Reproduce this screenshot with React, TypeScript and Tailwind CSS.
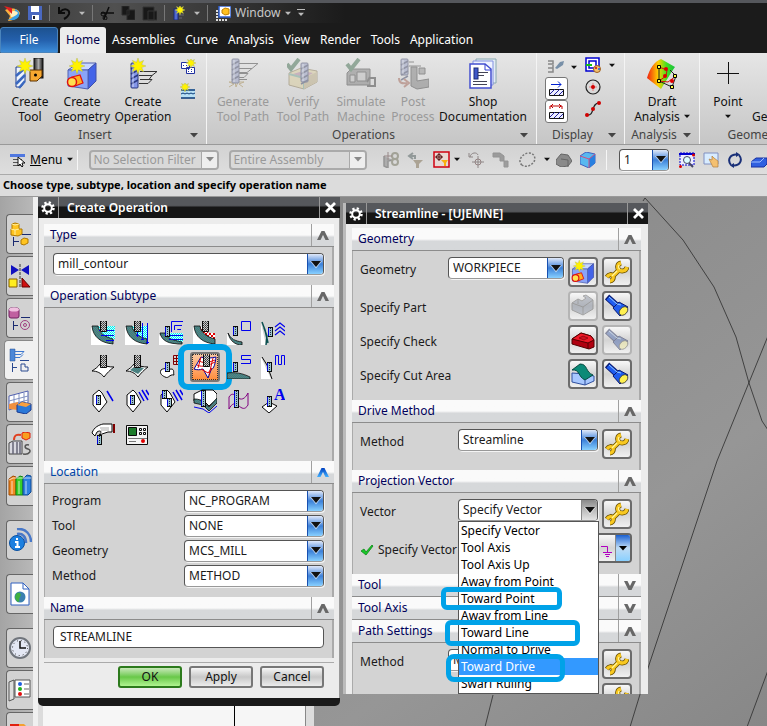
import type { ReactNode } from "react";

const INK = "#0a0a0a";

/* ---------- shared drawing parts ---------- */

function Patterns() {
  return (
    <svg className="absolute size-0" aria-hidden="true">
      <defs>
        <pattern id="mesh" width="2" height="2" patternUnits="userSpaceOnUse">
          <rect width="2" height="2" fill="#c8c8c8" />
          <rect width="1" height="1" fill="#333" />
          <rect x="1" y="1" width="1" height="1" fill="#555" />
        </pattern>
        <pattern id="teal" width="2" height="2" patternUnits="userSpaceOnUse">
          <rect width="2" height="2" fill="#2a8a8a" />
          <rect width="1" height="1" fill="#6a7878" />
          <rect x="1" y="1" width="1" height="1" fill="#6a7878" />
        </pattern>
        <pattern id="cyan" width="2" height="2" patternUnits="userSpaceOnUse">
          <rect width="2" height="2" fill="#c8ffff" />
          <rect width="1" height="1" fill="#00f0f0" />
          <rect x="1" y="1" width="1" height="1" fill="#00f0f0" />
        </pattern>
        <pattern id="redmesh" width="4" height="4" patternUnits="userSpaceOnUse">
          <rect width="4" height="4" fill="#fff" />
          <rect width="2" height="2" fill="#e00000" />
          <rect x="2" y="2" width="2" height="2" fill="#e00000" />
        </pattern>
        <linearGradient id="metal" x1="0" x2="1" y1="0" y2="0">
          <stop offset="0" stopColor="#222" />
          <stop offset=".5" stopColor="#aaa" />
          <stop offset="1" stopColor="#111" />
        </linearGradient>
        <linearGradient id="rainbow" x1="0" x2="1" y1="0" y2="0">
          <stop offset="0" stopColor="#f02010" />
          <stop offset=".4" stopColor="#ffd000" />
          <stop offset=".7" stopColor="#40e020" />
          <stop offset="1" stopColor="#18c040" />
        </linearGradient>
        <linearGradient id="chev" x1="0" x2="0" y1="0" y2="1">
          <stop offset="0" stopColor="#0040c0" />
          <stop offset="1" stopColor="#40b0ff" />
        </linearGradient>
      </defs>
    </svg>
  );
}

function Svg({ w, h = w, children, dim }: { w: number; h?: number; children: ReactNode; dim?: boolean }) {
  return (
    <svg width={w} height={h} viewBox={`0 0 ${w} ${h}`} fill="none" aria-hidden="true"
      className={dim ? "shrink-0 opacity-45 grayscale-50" : "shrink-0"}>
      {children}
    </svg>
  );
}

function Star({ x, y, r = 7 }: { x: number; y: number; r?: number }) {
  const points = Array.from({ length: 16 }, (_, i) => {
    const a = (i * Math.PI) / 8;
    const d = i % 2 ? r * 0.5 : r;
    return `${(x + d * Math.sin(a)).toFixed(1)},${(y - d * Math.cos(a)).toFixed(1)}`;
  }).join(" ");
  return <polygon points={points} fill="#fff200" stroke="#a8b060" strokeWidth=".4" />;
}

function Mill({ x = 9, y = 0, h = 11 }: { x?: number; y?: number; h?: number }) {
  return (
    <>
      <rect x={x} y={y} width="7" height={h} fill="url(#mesh)" />
      <path d={`M${x + 0.5} ${y}V${y + h - 0.5}H${x + 6.5}V${y}`} stroke={INK} />
    </>
  );
}

function Cutter({ x, y, h = 10 }: { x: number; y: number; h?: number }) {
  return (
    <>
      <rect x={x} y={y} width="5" height={h} fill="#9cc4cc" />
      <path d={`M${x + 0.5} ${y}v${h}`} stroke="#0000e0" />
      <path d={`M${x + 4.5} ${y}v${h}M${x} ${y + 0.5}h5M${x} ${y + h - 0.5}h5`} stroke={INK} />
      <path d={`M${x + 2.5} ${y + 1}v${h - 2}`} stroke="#224" strokeDasharray="1 1" />
    </>
  );
}

function Arrow({ className = "text-[#222]" }: { className?: string }) {
  return (
    <svg width="8" height="5" viewBox="0 0 8 5" className={`shrink-0 ${className}`} aria-hidden="true">
      <path d="M0 0H8L4 4.6Z" fill="currentColor" />
    </svg>
  );
}

/* ---------- ribbon icons ---------- */

function Drill({ x, y = 0, h = 26 }: { x: number; y?: number; h?: number }) {
  return (
    <>
      <rect x={x} y={y} width="7" height={h} rx="1" fill="#8496e8" stroke="#2a3880" />
      <path d={`M${x} ${y + 6}l7-4M${x} ${y + 11}l7-4M${x} ${y + 16}l7-4M${x} ${y + 21}l7-4`} stroke="#2a3880" strokeWidth="1.5" />
      <path d={`M${x + 2} ${y + 1}v${h - 2}`} stroke="#dfe6ff" strokeWidth=".8" />
    </>
  );
}

function CreateToolIcon() {
  return (
    <Svg w={32}>
      <rect x="20" y="0" width="9" height="20" fill="url(#metal)" stroke="#111" />
      <path d="M16 12h12v6l-5 5h-7Z" fill="#f6a830" stroke="#5a3000" />
      <circle cx="21.500" cy="17" r="1.500" fill="#000" />
      <path d="M2 9h9v14l-4 6H2Z" fill="#eef4fc" stroke="#1b3a90" />
      <path d="M2 18l9-8M2 26l9-9M5 30l6-7" stroke="#3a68c0" strokeWidth="2.500" />
      <Star x={11} y={8} r={8} />
    </Svg>
  );
}

function CreateGeometryIcon({ w = 32 }: { w?: number }) {
  return (
    <svg width={w} height={w} viewBox="0 0 32 32" fill="none" aria-hidden="true">
      <path d="M2 12l10-7h18l-8 7H2Z" fill="#c8d8ff" stroke="#5060b0" />
      <path d="M22 12l8-7v18l-8 8Z" fill="#4464e8" stroke="#4050a8" />
      <path d="M2 12h20v19L2 28Z" fill="#8aa4f8" stroke="#5060b0" />
      <path d="M6 19l8-2 3 8-8 3Z" fill="#ffb020" stroke="#e01010" strokeWidth="1.200" />
      <circle cx="6" cy="24" r="4.500" fill="#ffe050" stroke="#e01010" strokeWidth="1.500" />
      <Star x={11} y={8} r={8} />
    </svg>
  );
}

function CreateOperationIcon() {
  return (
    <Svg w={32}>
      <path d="M13 13.500h17l-5 4H12M13 21.500h12l-4 4H12M14 17.500h11l-3 4" stroke="#333" />
      <Drill x={4} y={5} h={25} />
      <Star x={11} y={8} r={8} />
    </Svg>
  );
}

function GenerateIcon() {
  return (
    <Svg w={32} dim>
      <path d="M12 5.500h19l-6 5H12M12 10.500h13l-5 4h-8M12 15.500h9l-4 4h-5M12 21.500h8" stroke="#333" />
      <path d="M2 29l5-3-5-2 6 0 1 5 2-5 6 0-5 2 4 3" stroke="#b88000" />
      <Drill x={5} y={1} h={24} />
    </Svg>
  );
}

function VerifyIcon() {
  return (
    <Svg w={32} dim>
      <path d="M2 15l12-5 16 3v11l-13 7L2 27Z" fill="#e8cc60" stroke="#907020" />
      <path d="M6 16l10-3 10 2-9 5Z" fill="#d070a0" />
      <path d="M2 16l15 4v11" stroke="#4a8" strokeWidth="2" />
      <path d="M17 20l13-6v10l-13 7Z" fill="#c8a850" />
      <Drill x={14} y={5} h={19} />
      <path d="M0 6l4 5 8-10" stroke="#107030" strokeWidth="4" />
    </Svg>
  );
}

function SimulateIcon() {
  return (
    <Svg w={32} dim>
      <path d="M2 15l4-4h19v16H2Z" fill="#777" stroke="#333" />
      <path d="M5 17h5v7H5zM12 14h9v9h-9z" fill="#bbb" stroke="#333" />
      <path d="M22 28h8v-8h-5M25 19l-3 5" stroke="#333" strokeWidth="2" />
      <path d="M2 6l4 5 8-10" stroke="#107030" strokeWidth="4" />
    </Svg>
  );
}

function PostIcon() {
  return (
    <Svg w={32} dim>
      <path d="M12 4h5M12 8h12" stroke="#333" />
      <path d="M14 9h6v14l12-2v8l-12 2-6-3Z" fill="#777" stroke="#333" />
      <path d="M22 10h6v6h-6z" fill="#888" stroke="#333" />
      <Drill x={4} y={1} h={16} />
      <path d="M2 20c0 5 3 6 8 5M7 21l5 4-5 4" stroke="#d05030" strokeWidth="2" />
    </Svg>
  );
}

function ShopDocIcon() {
  return (
    <Svg w={28} h={32}>
      <path d="M7 1h20v24H7z" fill="#e4ecf4" stroke="#88a8b0" />
      <path d="M4 3h20v24H4z" fill="#eef2ff" stroke="#8090e0" />
      <path d="M1 6h15l6 5v19H1z" fill="#fff" stroke="#4450d0" strokeWidth="1.500" />
      <path d="M16 6v6h6" stroke="#3440d0" />
      <path d="M9 14.500h10M9 17.500h6M4 23.500h14M4 26.500h14" stroke="#445" />
      <rect x="5" y="10" width="4" height="11" fill="#4058c8" stroke="#1b2a78" />
    </Svg>
  );
}

function DraftIcon() {
  return (
    <Svg w={32}>
      <path d="M1 20C4 10 8 4 15 1l14 8c-3 4-5 8-14 22Z" fill="url(#rainbow)" />
      <path d="M13 9v14l13 6 4-11-6-6" stroke="#222" />
      <path d="M13 9l8 3-1 6-7 5 9 1 8-6" stroke="#d01010" />
      <path d="M11.500 7.500h3v3h-3zM11.500 21.500h3v3h-3zM27.500 16.500h3v3h-3zM24.500 27.500h3v3h-3z" fill="#ffff40" stroke="#000" />
      <circle cx="20" cy="11" r="2" fill="#e00000" />
      <circle cx="19" cy="18" r="2" fill="#e00000" />
      <circle cx="26" cy="23" r="2" fill="#e00000" />
    </Svg>
  );
}

function PointIcon() {
  return (
    <Svg w={32}>
      <path d="M16.500 4v22M5 15.500h22" stroke="#111" />
    </Svg>
  );
}

/* ---------- operation subtype icons, one per cell ---------- */

const ARC = <path d="M1 5h6c1 7 7 11 15 13v5C10 22 2 16 1 5Z" fill="url(#teal)" stroke={INK} strokeWidth=".8" />;
const UNDER = <path d="M0 5v19h22Z" fill="#fff" />;
const SHEET = <path d="M1 16c3-2 6-4 8-7 4 2 9 3 14 3-4 3-7 6-10 10-3-4-7-6-12-6Z" fill="#fff" stroke={INK} />;
const FACET = <path d="M8 1L2 6v10l6 7 8-10-5-9Z" fill="#fff" stroke={INK} />;

const SUBTYPES: { name: string; art: ReactNode }[] = [
  { name: "Cavity Mill", art: <>{UNDER}<path d="M7 5h17v13H12Z" fill="url(#cyan)" />{ARC}<path d="M8 9.500h15M10 14.500h13M15 19.500h8" stroke="#00e" /><Mill /></> },
  { name: "Plunge Milling", art: <>{UNDER}<path d="M7 5h15v13H12Z" fill="url(#cyan)" />{ARC}<Mill /><path d="M12.500 11v5M17.500 2v17M22.500 2v21M11 14.500h3M16 18.500h3M21 21.500h3" stroke="#00e" /></> },
  { name: "Corner Rough", art: <><path d="M0 14v10h19Z" fill="#fff" /><path d="M5 12h19v9H10Z" fill="url(#cyan)" /><path d="M1 12h5c2 6 8 7 17 9v2C9 23 3 20 1 12Z" fill="url(#teal)" stroke={INK} strokeWidth=".8" /><path d="M10 14.500h14M10 18.500h14M12.500 11V.5H24M15.500 9V4.500H23M18.500 8V8.500H22" stroke="#00e" /><Cutter x={6} y={5} h={11} /></> },
  { name: "Rest Milling", art: <>{UNDER}<path d="M6 6h9v6h7v7h-8Z" fill="url(#redmesh)" />{ARC}<Mill /></> },
  { name: "Zlevel Profile", art: <><path d="M0 12v12h14Z" fill="#fff" /><path d="M1 12c3 6 7 8 14 9v3C8 24 3 20 1 12Z" fill="url(#teal)" stroke={INK} strokeWidth=".8" /><Cutter x={6} y={5} /><path d="M14.500.5h9v9h-9z" stroke="#00e" /></> },
  { name: "Zlevel Corner", art: <><path d="M0 2v22h5Z" fill="#fff" /><path d="M1 1l3 8 3 13M3 7l3 8-1 9" stroke="#0b5050" strokeWidth="1.500" /><Cutter x={7} y={6} h={10} /><path d="M14 6l5-4 5 4M14 10l5-4 5 4M14 14l5-4 5 4" stroke="#00e" strokeWidth="1.200" /></> },
  { name: "Fixed Contour", art: <>{SHEET}<Mill h={13} /></> },
  { name: "Contour Area", art: <>{SHEET}<path d="M5 15l5-4 9 2-6 6Z" fill="url(#teal)" /><Mill h={13} /></> },
  { name: "Contour Surface Area", art: <><path d="M2 15c4-3 7 0 10-1 4 0 2 4 3 6-5-1-5 4-9 2-2-1-6-3-4-7Z" fill="#fff" stroke={INK} /><Cutter x={6} y={7} /><path d="M14.500.5h9v9h-9zM17.500.5v9M20.500.5v9M14.500 3.500h9M14.500 6.500h9" stroke="#800000" /></> },
  { name: "Streamline", art: <><path d="M1 14L8 2c5 2 10 1 15 0-1 8-2 11-5 13l-3 8-5-9c-3 1-6 1-9 0Z" fill="#fff" stroke="#0000a0" /><path d="M4 10c6 3 12 0 18-3M6 6c6 3 11 1 16-1M8 14l7 4 4-5M8 2L5 13M20 3l-4 17" stroke="#e00000" /><Mill x={10} h={12} /></> },
  { name: "Contour Area Non Steep", art: <><path d="M0 18c8-1 15 0 23 4v2H0Z" fill="url(#teal)" stroke={INK} strokeWidth=".8" /><Cutter x={6} y={7} /><path d="M24 .5h-9.500v4h9v4H14" stroke="#00e" /></> },
  { name: "Contour Area Dir Steep", art: <><path d="M0 2v22h10Z" fill="#fff" /><path d="M1 2l5 8 5 14" stroke={INK} /><Cutter x={6} y={7} h={10} /><path d="M14.500 10V.5h3v9h3V.5h3V10" stroke="#00e" /></> },
  { name: "Flowcut Single", art: <>{FACET}<Cutter x={5} y={6} /><path d="M16 2l6 10" stroke="#00e" strokeWidth="1.500" /></> },
  { name: "Flowcut Multiple", art: <>{FACET}<Cutter x={5} y={6} /><path d="M14 3l5 9M17 1l6 10M21 1l3 5" stroke="#00e" strokeWidth="1.500" /></> },
  { name: "Flowcut Ref Tool", art: <>{FACET}<Cutter x={3} y={1} h={9} /><Cutter x={8} y={9} h={9} /><path d="M14 3l5 9M17 1l6 10M21 1l3 5" stroke="#00e" strokeWidth="1.500" /></> },
  { name: "Solid Profile 3D", art: <><path d="M1 5l8-4 11 0 4 4v5l-8 7-6-6-9 1Z" fill="#fff" stroke={INK} /><path d="M1 10c5 0 7 1 9 3l6 5 8-9v5l-8 8-6-6-9-2Z" fill="url(#teal)" stroke={INK} strokeWidth=".8" /><path d="M1 18l9 2 6 4 8-7" stroke="#00e" /><Cutter x={8} y={1} h={17} /></> },
  { name: "Profile 3D", art: <><path d="M2 20V8c3-5 6-2 8 0 4 4 8 2 11-4v12c-3 5-6 4-10 0-3-2-6-2-9 4Z" stroke="#800080" /><Cutter x={7} y={1} h={18} /></> },
  { name: "Contour Text", art: <><path d="M1 18l7-5 8 4-8 7Z" fill="#fff" stroke={INK} /><Cutter x={6} y={7} h={11} /><text x="13" y="11" fontSize="16" fontWeight="700" fontFamily="Liberation Serif, serif" fill="#00e">A</text></> },
  { name: "Mill User", art: <><path d="M1 10C3 4 8 2 12 1h9v8h-4l-9 3c4-4 1-5-2-3l-2 4Z" fill="#fff" stroke={INK} /><path d="M9 5h9M10 7h8" stroke="#aaa" /><path d="M22 1h2v9h-2z" fill="#800000" /><Cutter x={6} y={12} /></> },
  { name: "Mill Control", art: <><path d="M1.500 2.500h21v19h-21z" fill="#f4f4f4" stroke={INK} /><path d="M3.500 4.500h8v8h-8z" fill="#1b7a2a" stroke={INK} /><path d="M14.500 5.500h2v2h-2zM18.500 5.500h2v2h-2zM14.500 9.500h2v2h-2zM18.500 9.500h2v2h-2z" fill="#fff" stroke={INK} /><path d="M3 15.500h19M4 18.500h7" stroke="#777" /><circle cx="18" cy="18" r="2" fill="#e00000" /></> },
];

/* ---------- small icons for rows ---------- */

function Wrench() {
  const d = "M16 3c-4 1-4 5-2 7 3 2 7 1 8-3M14 10L8 16M2 17c2-3 5-3 6-1 1 3-1 5-3 5";
  return (
    <Svg w={24}>
      <path d={d} stroke="#6a5000" strokeWidth="5" />
      <path d={d} stroke="#f8c820" strokeWidth="3.400" />
      <path d="M14 5c-1 2 0 4 1 4M12 11l-5 5" stroke="#fff6a0" strokeWidth="1.200" />
    </Svg>
  );
}

function Torch({ dim }: { dim?: boolean }) {
  return (
    <Svg w={24} dim={dim}>
      <path d="M2 3l10 9" stroke="#0a1a70" strokeWidth="6.500" />
      <path d="M3 4l10 9" stroke="#1f5cf0" strokeWidth="4.500" />
      <path d="M8 14l6-6 9 5-8 9Z" fill="#1f5cf0" stroke="#0a1a70" />
      <path d="M4 3l8 7 4 1" stroke="#90c8ff" />
      <ellipse cx="18.500" cy="17" rx="5" ry="3.500" transform="rotate(-45 18.5 17)" fill="#fff050" stroke="#333" strokeWidth=".8" />
    </Svg>
  );
}

function PartIcon() {
  return (
    <Svg w={24} dim>
      <path d="M1 9l6-4 4 2 4-3-3-2 3-1 7 5v9l-10 6-11-5Z" fill="#8090b0" stroke="#555" />
      <path d="M12 13v8M1 9l11 4 10-7M7 5v5" stroke="#555" />
    </Svg>
  );
}

function CheckIcon() {
  return (
    <Svg w={24}>
      <path d="M1 11l9-6 10 3 3 4v7l-5 2-17-5Z" fill="#b00010" stroke="#500" />
      <path d="M1 11l9-6 10 3 3 4-6 3Z" fill="#f01828" stroke="#500" />
      <path d="M8 10l4-2 5 2-4 2Z" fill="#d01020" stroke="#500" strokeWidth=".5" />
      <path d="M17 15v6" stroke="#500" />
    </Svg>
  );
}

function CutAreaIcon() {
  return (
    <Svg w={24}>
      <path d="M1 11v9l13 3 9-4v-5l-9-2Z" fill="#a8c8ff" stroke="#3050a0" />
      <path d="M1 8L9 2c8 0 5 8 13 11l-8 5C7 15 9 7 1 8Z" fill="#0b8a78" stroke="#064a40" />
      <path d="M14 18v5" stroke="#3050a0" />
    </Svg>
  );
}

/* ---------- form pieces ---------- */

function Select({ id, value, options = [], className = "", plain }: { id: string; value: string; options?: string[]; className?: string; plain?: boolean }) {
  return (
    <span className={`flex h-[22px] shrink-0 overflow-hidden rounded-[4px] border border-[#555] border-b-[#999] bg-white shadow-[1px_1px_0_#f4f4f4] ${className}`}>
      <select id={id} defaultValue={value} className="min-w-0 flex-1 appearance-none bg-transparent pb-px pl-1 leading-5 outline-none">
        {[value, ...options].map((o) => <option key={o}>{o}</option>)}
      </select>
      <span className={`pointer-events-none flex w-4 shrink-0 items-center justify-center border-l ${plain ? "border-[#888] bg-linear-to-b from-[#8a8a8a] via-[#bbb] to-[#e4e4e4]" : "border-[#1850b0] bg-linear-to-b from-[#e0e8f8] via-[#3c80d8] to-[#88d0ff]"}`}>
        <svg width="12" height="9" viewBox="0 0 12 9" aria-hidden="true">
          <path d="M0 1H12L6 8.500Z" fill="#fff" fillOpacity=".6" />
          <path d="M1 1H11L6 7Z" fill="#111" />
        </svg>
      </span>
    </span>
  );
}

function IconButton({ label, children, dim }: { label: string; children: ReactNode; dim?: boolean }) {
  return (
    <button aria-label={label} disabled={dim}
      className={`flex size-[30px] shrink-0 items-center justify-center rounded-[4px] border-2 bg-linear-to-b from-[#f8f8f8] via-[#d4d4d4] to-[#f0f0f0] ${dim ? "border-[#b4b4b4]" : "border-[#6c6c6c]"}`}>
      {children}
    </button>
  );
}

function Header({ title, closed, active }: { title: string; closed?: boolean; active?: boolean }) {
  return (
    <button className={`flex h-[23px] w-full shrink-0 border-b border-[#8c8c8c] bg-linear-to-b from-[#fafafa] from-50% to-[#d6d8da] to-60% text-left leading-[22px] ${active ? "text-[#0046a8]" : "text-[#00005a]"}`}>
      <span className="flex-1 pl-1.5">{title}</span>
      <span className="flex h-full w-[23px] items-center justify-center border-l border-[#a0a0a0]">
        <svg width="12" height="9" viewBox="0 0 12 9" aria-hidden="true" className={closed ? "rotate-180" : ""}>
          <path d="M0 9L4.500 0h3L12 9H8.500L6 4 3.500 9Z" fill={active ? "url(#chev)" : "#686868"} />
        </svg>
      </span>
    </button>
  );
}

function TitleBar({ title }: { title: string }) {
  return (
    <div className="flex h-[21px] shrink-0 items-center bg-linear-to-b from-[#56585c] from-40% to-[#161616] to-50% text-white">
      <span className="flex h-full w-[21px] items-center justify-center border-r border-[#999]">
        <svg width="14" height="14" viewBox="0 0 14 14" fill="none" aria-hidden="true">
          <circle cx="7" cy="7" r="5.500" stroke="#fff" strokeWidth="2.500" strokeDasharray="2.200 2.120" />
          <circle cx="7" cy="7" r="3.800" stroke="#fff" strokeWidth="2" />
        </svg>
      </span>
      <h2 className="flex-1 pl-2 font-semibold">{title}</h2>
      <button aria-label="Close" className="flex h-full w-[21px] items-center justify-center border-l border-[#999]">
        <svg width="11" height="11" viewBox="0 0 11 11" aria-hidden="true">
          <path d="M1 1L10 10M10 1L1 10" stroke="#fff" strokeWidth="2.800" />
        </svg>
      </button>
    </div>
  );
}

const BODY = "border-l border-r-2 border-l-[#aaa] border-r-[#aaa] bg-[#d3d3d3]";

/* ---------- ribbon ---------- */

function BigButton({ lines, icon, className, dim, menu }: { lines: string[]; icon: ReactNode; className: string; dim?: boolean; menu?: boolean }) {
  return (
    <button className={`flex shrink-0 flex-col items-center pt-[5px] leading-[15px] whitespace-nowrap ${dim ? "text-[#9a9a9a]" : "text-[#111]"} ${className}`}>
      <span className="flex h-9 items-start">{icon}</span>
      <span>{lines[0]}</span>
      <span className="flex h-[15px] items-center gap-1">{lines[1]}{menu && <Arrow className="w-1.5 text-[#111]" />}</span>
    </button>
  );
}

function Group({ label, className, children, arrow = true }: { label: string; className: string; children: ReactNode; arrow?: boolean }) {
  return (
    <section className={`flex shrink-0 flex-col border-r border-[#f4f4f4] ${className}`}>
      <div className="flex h-[74px]">{children}</div>
      <div className="flex h-4 items-center pr-2 text-[#444]">
        <span className="flex-1 text-center">{label}</span>
        {arrow && <Arrow className="text-[#444]" />}
      </div>
    </section>
  );
}

function Ribbon() {
  return (
    <div className="flex h-[92px] shrink-0 overflow-hidden border-b border-[#999] bg-linear-to-b from-[#e6e6e6] to-[#c6c6c6]">
      <Group label="Insert" className="w-[207px]">
        <BigButton lines={["Create", "Tool"]} icon={<CreateToolIcon />} className="ml-2 w-11" />
        <BigButton lines={["Create", "Geometry"]} icon={<CreateGeometryIcon />} className="w-[60px]" />
        <BigButton lines={["Create", "Operation"]} icon={<CreateOperationIcon />} className="w-[62px]" />
        <div className="flex flex-col gap-2 pt-1.5 pl-1.5">
          <button aria-label="Create Program">
            <Svg w={16}>
              <path d="M1.500 3.500h8v6h-8zM6.500 8.500h8v6h-8z" fill="#fff" stroke="#2030a0" />
              <path d="M3 6.500h1M6 6.500h1M8 10.500h1M11 10.500h1M8 12.500h1M11 12.500h1" stroke="#2030a0" />
              <Star x={11} y={4} r={5} />
            </Svg>
          </button>
          <button aria-label="Create Method">
            <Svg w={16}>
              <path d="M1 6h14v9H1z" fill="#b8e0f4" />
              <path d="M1 7h14M1 15h14" stroke="#0a3a78" strokeWidth="1.500" />
              <path d="M1 11l2-1 2 1 2-1 2 1 2-1 2 1 2-1" stroke="#0a3a78" />
              <Star x={5} y={4} r={5} />
            </Svg>
          </button>
        </div>
      </Group>
      <Group label="Operations" className="w-[330px]">
        <BigButton dim lines={["Generate", "Tool Path"]} icon={<GenerateIcon />} className="ml-1.5 w-[60px]" />
        <BigButton dim lines={["Verify", "Tool Path"]} icon={<VerifyIcon />} className="w-[60px]" />
        <BigButton dim lines={["Simulate", "Machine"]} icon={<SimulateIcon />} className="w-[56px]" />
        <BigButton dim lines={["Post", "Process"]} icon={<PostIcon />} className="w-[48px]" />
        <BigButton lines={["Shop", "Documentation"]} icon={<ShopDocIcon />} className="w-[92px]" />
      </Group>
      <Group label="Display" className="w-[88px]">
        <div className="flex flex-col pt-1 pl-2">
          <button className="flex h-5 items-center gap-1.5" aria-label="Show tool path">
            <Svg w={20} h={16}>
              <path d="M3 2h5v3H3M3 9h5V6M3 9h5v4H3" stroke="#888" strokeWidth="1.500" />
              <path d="M10 9l5-6 4-1-1 4-6 4Z" fill="#7890a8" />
            </Svg>
            <Arrow className="w-1.5 text-[#111]" />
          </button>
          {["#0020d0", "#c00000"].map((c) => (
            <button key={c} aria-label="Boundary display" className="flex size-[23px] items-center justify-center rounded-[3px] border border-[#777] bg-white">
              <Svg w={17}>
                <path d="M1.500 9.500h14v6h-14z" fill="#eef" stroke="#111" />
                <path d="M2 14l5-5M6 15l6-6M11 15l4-4" stroke="#2020a0" />
                <path d={c === "#c00000" ? "M2 6V3h12v3M5 1L3 3l2 2M11 1l2 2-2 2" : "M3 4.500h10M10 1.500l3 3-3 3"} stroke={c} />
              </Svg>
            </button>
          ))}
        </div>
        <div className="flex flex-col gap-1.5 pt-1 pl-2">
          <button className="flex items-center gap-2" aria-label="Object colors">
            <Svg w={16}>
              <path d="M1 1h13v13H1zM4 4h7v7H4z" fill="#fff" stroke="#0000d0" strokeWidth="1.500" />
              <path d="M1 8h6" stroke="#10c010" strokeWidth="2" />
              <circle cx="12" cy="12" r="3.500" fill="#f0c070" stroke="#a06020" />
              <circle cx="11" cy="11" r="1" fill="#e00000" />
              <circle cx="14" cy="12" r="1" fill="#2060e0" />
            </Svg>
            <Arrow className="w-1.5 text-[#111]" />
          </button>
          <button aria-label="Circle center">
            <Svg w={16}>
              <circle cx="8" cy="8" r="7" stroke="#222" strokeWidth="1.200" />
              <path d="M8 4v8M4 8h8" stroke="#e08080" />
              <circle cx="8" cy="8" r="2" fill="#d00000" />
            </Svg>
          </button>
          <button aria-label="Curve ends">
            <Svg w={16}>
              <path d="M2 14c8 1 4-12 12-12" stroke="#222" strokeWidth="1.200" />
              <circle cx="2" cy="14" r="2" fill="#d00000" />
              <circle cx="8" cy="8" r="2" fill="#d00000" />
              <circle cx="14" cy="2" r="2" fill="#d00000" />
            </Svg>
          </button>
        </div>
      </Group>
      <Group label="Analysis" className="w-[75px]">
        <BigButton menu lines={["Draft", "Analysis"]} icon={<DraftIcon />} className="w-full" />
      </Group>
      <Group label="Geometry" className="w-[120px]" arrow={false}>
        <BigButton menu lines={["Point", ""]} icon={<PointIcon />} className="w-14" />
        <BigButton lines={["Edit", "Geometry"]} icon={null} className="-ml-1 w-14" />
      </Group>
    </div>
  );
}

function QuickAccess() {
  return (
    <div className="flex h-[23px] shrink-0 items-center border-t-3 border-[#55575c] bg-linear-to-r from-[#3a3a3a] via-[#505050] via-15% to-[#1b1b1b] to-45%">
      <div className="flex items-center gap-[7px] pl-1">
        <Svg w={17}>
          <path d="M1 5c7-3 14-1 15 3-1 4-6 8-12 8l2-5Z" fill="#f8b040" />
          <path d="M3 15c6-1 8-5 8-11 6 2 6 9-1 11Z" fill="#38a0e8" />
          <path d="M6 8c3-3 7-2 8 0-1 2-4 4-7 4Z" fill="#fff0c0" />
          <path d="M0 1l8 2 0 6Z" fill="#e02020" />
        </Svg>
        <button aria-label="Save">
          <Svg w={14}>
            <path d="M0 0h14v14H0z" fill="#4a68c0" />
            <path d="M3 0h8v6H3zM4 9h7v5H4z" fill="#fff" />
            <path d="M5 10h2v3H5z" fill="#223" />
          </Svg>
        </button>
        <span className="h-4 w-px bg-[#777]" />
        <button aria-label="Undo" className="flex items-center gap-2">
          <Svg w={14}><path d="M2 1v6h6M3 6c5-5 10-2 9 2-1 3-3 4-5 5" stroke="#0c0c0c" strokeWidth="2" /></Svg>
          <Arrow className="w-1.5 text-[#bbb]" />
        </button>
        <span className="h-4 w-px bg-[#777]" />
        <button aria-label="Cut"><Svg w={14}><path d="M1 7h13M4 13L9 1" stroke="#0c0c0c" strokeWidth="1.500" /><circle cx="3" cy="8" r="2" stroke="#0c0c0c" /><circle cx="5" cy="12" r="2" stroke="#0c0c0c" /></Svg></button>
        <button aria-label="Copy"><Svg w={14}><path d="M1 0h7v9H1zM6 4h8v10H6z" fill="#181818" stroke="#2c2c2c" /></Svg></button>
        <button aria-label="Paste"><Svg w={15}><path d="M1 1h11v13H1zM6 5h9v9H6z" fill="#181818" stroke="#333" /></Svg></button>
        <span className="h-4 w-px bg-[#777]" />
        <button aria-label="Create Operation" className="flex items-center gap-2">
          <Svg w={14}><rect x="2" y="3" width="4" height="11" fill="#5068d0" stroke="#1b2a78" /><path d="M7 9h5M7 12h3" stroke="#667" /><Star x={8} y={4} r={5} /></Svg>
          <Arrow className="w-1.5 text-[#bbb]" />
        </button>
        <span className="h-4 w-px bg-[#777]" />
      </div>
      <button className="flex items-center gap-1 pl-2 text-[#c8c8c8]">
        <Svg w={15}>
          <path d="M1 4v10h10" stroke="#ddd" strokeWidth="2" strokeDasharray="2 1" />
          <path d="M3 0h12v11H3z" fill="#fff" stroke="#3060d0" strokeWidth="1.500" />
          <path d="M6 4l3-2 4 1v5l-4 1-3-2Z" fill="#ffc020" stroke="#c08000" />
        </Svg>
        Window
        <Arrow className="w-1.5 text-[#bbb]" />
      </button>
      <span className="flex flex-col items-center gap-0.5 pl-1.5">
        <span className="h-px w-2 bg-[#bbb]" />
        <Arrow className="w-1.5 text-[#bbb]" />
      </span>
    </div>
  );
}

const TABS = ["Assemblies", "Curve", "Analysis", "View", "Render", "Tools", "Application"];

function Tabs() {
  return (
    <nav className="flex h-[30px] shrink-0 items-end bg-[#1b1b1b] text-white">
      <a href="#file" className="flex h-[26px] w-[58px] items-center justify-center rounded-t-[3px] border border-[#4a84bc] bg-linear-to-b from-[#1d5290] via-[#2460ac] to-[#3c8cd8]">File</a>
      <a href="#home" className="ml-0.5 flex h-[26px] w-[46px] items-center justify-center rounded-t-[3px] bg-[#ececec] text-[#00004a]">Home</a>
      <div className="flex h-[26px] items-center gap-2.5 pl-1.5">
        {TABS.map((t) => <a key={t} href={`#${t.toLowerCase()}`}>{t}</a>)}
      </div>
    </nav>
  );
}

function FilterSelect({ label, className }: { label: string; className: string }) {
  return (
    <span className={`flex h-5 overflow-hidden rounded-[4px] border-2 border-[#aaa] bg-[#d9d9d9] text-[#999] ${className}`}>
      <select aria-label={label} disabled className="min-w-0 flex-1 appearance-none bg-transparent pl-0.5 leading-4 opacity-100">
        <option>{label}</option>
      </select>
      <span className="flex w-4 items-center justify-center border-l border-[#aaa] bg-[#eee]"><Arrow className="text-[#888]" /></span>
    </span>
  );
}

function SelectionBar() {
  return (
    <div className="flex h-[30px] shrink-0 items-center overflow-hidden border-b border-[#aaa] bg-linear-to-b from-[#d2d2d2] to-[#dedede]">
      <button className="flex items-center gap-1 pl-2.5 text-black">
        <Svg w={16}>
          <path d="M0 2h15v3H0z" fill="#5078e0" />
          <path d="M3 7.500h9M3 10.500h9M3 13.500h9" stroke="#555" />
          <path d="M8 5v9l2-2 2 3 1-1-1-3h3Z" fill="#fff" stroke="#111" />
        </Svg>
        <span><u>M</u>enu</span>
        <Arrow className="w-1.5 text-[#111]" />
      </button>
      <span className="ml-1 h-5 w-px bg-[#f6f6f6]" />
      <FilterSelect label="No Selection Filter" className="ml-3 w-[135px]" />
      <FilterSelect label="Entire Assembly" className="ml-2.5 w-[143px]" />
      <div className="flex items-center gap-2 pl-4">
        <Svg w={16} dim><path d="M1 4v10l4 2V9l5-1" fill="#777" stroke="#444" strokeWidth="1.500" /><circle cx="12" cy="4" r="3" stroke="#663" strokeWidth="2" /><circle cx="12" cy="10" r="3" stroke="#663" strokeWidth="2" /><path d="M5 0v8M1 4h8" stroke="#622" /></Svg>
        <Svg w={16} dim><path d="M6 1L2 4l4 3M2 4h6v3" stroke="#355" strokeWidth="2" /><path d="M6 8h10l-4 4v4H9v-4Z" fill="#866020" /></Svg>
      </div>
      <div className="flex items-center gap-1 pl-2.5">
        <Svg w={17}><path d="M1 1h15v15H1z" fill="#e8d8d4" stroke="#d00010" strokeWidth="1.500" /><circle cx="6" cy="6" r="2.500" stroke="#511" /><path d="M6 2v8M2 6h8" stroke="#511" /><path d="M8 9h7l-2 3v3h-2v-3Z" fill="#f8b010" /></Svg>
        <Arrow className="w-1.5 text-[#111]" />
      </div>
      <div className="flex items-center gap-2 pl-2">
        <Svg w={16} dim><circle cx="10" cy="10" r="3" stroke="#611" /><path d="M10 4v12M4 10h12M2 5c1-5 7-5 8-2M1 1v4h4" stroke="#422" /></Svg>
        <Svg w={18} h={16} dim><path d="M1 1h7l4 3v5H8V5H1zM12 9h4v6h-4z" fill="#555" stroke="#444" /></Svg>
        <Svg w={18} h={16}><path d="M4 13C-1 9 4 2 10 1s9 6 5 10-8 4-11 2" stroke="#777" strokeWidth="1.500" strokeDasharray="2 1.500" /></Svg>
        <Arrow className="w-1.5 text-[#111]" />
      </div>
      <div className="flex items-center gap-2 pl-1.5">
        <Svg w={16} h={14}><path d="M0 7l5-6 7 1 4 6-4 5-7 1-5-3Z" fill="#8a8a8a" stroke="#666" /><path d="M5 6l7 1v7" stroke="#666" /></Svg>
        <Svg w={16}><path d="M0 4l6-4 9 2v9l-6 5-9-4Z" fill="#58b8f0" stroke="#4060c0" /><path d="M9 7l6-5v9l-6 5Z" fill="#2880e0" /><path d="M0 4l9 3 6-5M9 7v9" stroke="#d05080" /></Svg>
      </div>
      <span className="ml-2.5 h-5 w-px bg-[#f6f6f6]" />
      <label htmlFor="work-layer" className="sr-only">Work layer</label>
      <Select id="work-layer" value="1" className="ml-3 w-[50px]" />
      <div className="flex shrink-0 items-center gap-2 pl-2.5">
        <Svg w={16}><path d="M1 1h14v12H1z" fill="#eef" stroke="#0000d0" strokeDasharray="2 1" /><path d="M0 2h16" stroke="#0000d0" strokeWidth="2" /><circle cx="8" cy="8" r="3.500" fill="#dff" stroke="#446" /><path d="M10 11l4 4" stroke="#446" strokeWidth="2" /><circle cx="1.500" cy="14.500" r="1.500" fill="#d00" /><circle cx="14.500" cy="3" r="1.500" fill="#d00" /></Svg>
        <Svg w={16}><path d="M1 1h14v11H1z" fill="#d8ecff" stroke="#8090c0" /><path d="M6 7l3 1V4l2 2 4 3v6h-5Z" fill="#f4c070" stroke="#b08040" strokeWidth=".7" /></Svg>
        <Svg w={16}><path d="M4 13C0 8 3 2 10 2.500M12 3c4 5 1 11-6 10.500" stroke="#1a3078" strokeWidth="2" /><path d="M9 0l4 2.500L9 5ZM7 11l-4 2.500L7 16Z" fill="#1a3078" /></Svg>
        <Svg w={16}><path d="M0 10l5-4h11v6l-3 3H0Z" fill="#3060e0" stroke="#1830a0" /><path d="M0 10h9l4-4" stroke="#a0c0ff" /></Svg>
      </div>
    </div>
  );
}

/* ---------- resource bar ---------- */

const RESOURCES: { name: string; space?: string; art: ReactNode }[] = [
  { name: "Assembly Navigator", art: <><path d="M4 2l3-1 4 1v5h3v5l-4 2-7-1V7h1Z" fill="#ffc420" stroke="#b07800" /><path d="M3 7l4 1 4-1M7 8v5M4 2l3 1 4-1" stroke="#fff0a0" /><path d="M13 18l3-2 4 1v4l-4 2-3-1Z" fill="#ffc420" stroke="#b07800" /><path d="M14 12.500h9M5.500 15v9M5 19.500h6" stroke="#1a2a70" /></> },
  { name: "Constraint Navigator", art: <><path d="M3 1l8 5-8 5zM21 1l-8 5 8 5z" fill="#1010c0" /><path d="M12 0v24" stroke="#333" strokeDasharray="3 1" /><path d="M1 15h8v8H1z" fill="#ffee20" stroke="#886000" /><path d="M14 14v9h8Z" fill="#d01010" stroke="#600" /></> },
  { name: "Part Navigator", art: <><rect x="1" y="2" width="10" height="10" rx="2" fill="#c060a0" stroke="#702060" /><ellipse cx="6" cy="3.500" rx="5" ry="2" fill="#f0c0e0" /><path d="M13 11.500h9M5.500 15v9M5 19.500h5" stroke="#1a2a70" /><circle cx="17" cy="19" r="4.500" stroke="#a04080" /><circle cx="17" cy="19" r="1.500" stroke="#a04080" /></> },
  { name: "Operation Navigator", art: <><path d="M3 1h5v12H3z" fill="#4c88d8" stroke="#2a5090" strokeWidth=".5" /><path d="M8 3.500h9l-3 3H8M8 9.500h5l3-3" stroke="#3c78d0" /><path d="M13 12.500h9M5.500 15v9M5 19.500h5M14 16h4v3h3v4h-7z" stroke="#2a4a90" /></> },
  { name: "Machine Tool Navigator", art: <><path d="M1 6L20 1v12L1 20Z" fill="#fff" stroke="#5060b0" /><path d="M6 5v14M11 4v13M16 3v11M1 11l19-5M1 15l19-5" stroke="#8090c0" /><path d="M1 14l9-2v8l-9-1Z" fill="#f09040" /><path d="M9 15l5-3 9 2v6l-5 4-9-2Z" fill="#2a78d8" stroke="#1a3a90" /><path d="M9 15l9 2 5-3-9-2Z" fill="#f8a040" /></> },
  { name: "Process Studio", art: <><path d="M1 11l4-2h9v13H1z" fill="#d8d8e0" stroke="#444" /><path d="M5 10v12M9 10v12M12 10v12" stroke="#667" strokeWidth="1.500" /><path d="M14 1l3-1 5 1v5l-4 2-4-2Z" fill="#f8a020" stroke="#e02010" /><path d="M6 8c0-5 3-6 7-5" stroke="#e04020" strokeWidth="2" /><path d="M21 13c-5-1-5 3-1 4s2 6-5 5" stroke="#555" strokeWidth="1.500" /></> },
  { name: "Reuse Library", space: "mb-3", art: <><path d="M1 5l4-3 3 1v18H1z" fill="#f08820" stroke="#a04800" /><path d="M8 5l4-3 3 1v18H8z" fill="#38d028" stroke="#108010" /><path d="M15 5l4-4 4 1v16l-3 3h-5z" fill="#2c80e0" stroke="#104890" /><path d="M1 6l4-2h18M4 7v13M11 7v13M18 7v13" stroke="#fff" strokeOpacity=".7" /></> },
  { name: "HD3D Tools", space: "mb-3", art: <><path d="M9 6c6-1 9 3 9 9M9 1c9-1 14 6 14 13" stroke="#4878c8" strokeWidth="2.500" /><circle cx="9" cy="15" r="7.500" fill="#1c80e0" stroke="#0a50a0" /><path d="M9 10v2M7 14h2.500v5M7 19h5" stroke="#fff" strokeWidth="2" /></> },
  { name: "Web Browser", space: "mb-3", art: <><path d="M3 1h12l6 6v16H3Z" fill="#fff" stroke="#3060c0" /><path d="M15 1v6h6" stroke="#3060c0" /><circle cx="12" cy="15" r="5.500" fill="#3a80b0" /><path d="M9 11c3-1 5 1 3 4s1 4-2 5c-3-2-4-6-1-9Z" fill="#40b040" /></> },
  { name: "History", art: <><circle cx="12" cy="12" r="10" fill="#e4e8f4" stroke="#70757c" strokeWidth="2" /><path d="M12 5v7h6" stroke="#111" strokeWidth="1.500" /><circle cx="12" cy="12" r="7.500" stroke="#333" strokeDasharray="1 3" /></> },
  { name: "System Materials", art: <><path d="M1 4l5-2v19l-5 2Z" fill="#ddd" stroke="#555" /><path d="M7 2h15v17H7z" fill="#fff" stroke="#555" /><circle cx="12" cy="6" r="2" fill="#2060e0" /><circle cx="12" cy="11" r="2" fill="#20b020" /><circle cx="12" cy="16" r="2" fill="#e01010" /><path d="M16 6h5M16 11h5M16 16h5" stroke="#666" /></> },
  { name: "Roles", art: <><path d="M2 4h14l6 6v14H2Z" fill="#f4a030" /><path d="M2 4h9v5H2z" fill="#e02010" /></> },
];

function ResourceBar() {
  return (
    <aside className="flex h-full w-[38px] shrink-0 flex-col gap-0.5 overflow-hidden border-r-5 border-[#f0f0f0] bg-linear-to-r from-[#a4a4a4] to-[#b8b8b8] pt-[17px] pl-1.5">
      {RESOURCES.map((r, i) => (
        <button key={r.name} aria-label={r.name}
          className={`flex h-10 shrink-0 items-center justify-center rounded-l-[4px] border border-r-0 ${i === 3 ? "-ml-0.5 border-[#888] bg-[#f0f0f0]" : "border-[#666] bg-[#d2d2d2]"} ${r.space ?? ""}`}>
          <Svg w={24}>{r.art}</Svg>
        </button>
      ))}
    </aside>
  );
}

/* ---------- dialogs ---------- */

const LOCATION = [
  ["Program", "NC_PROGRAM"],
  ["Tool", "NONE"],
  ["Geometry", "MCS_MILL"],
  ["Method", "METHOD"],
];

const PLAIN_BUTTON = "h-[22px] w-16 rounded-[3px] border-2 leading-none text-[#111]";

function CreateOperation() {
  return (
    <div role="dialog" aria-label="Create Operation" className="absolute top-0 left-[38px] z-10 flex w-[302px] flex-col rounded-b-[5px] border-b-8 border-[#1a1a1a] bg-[#ececec]">
      <TitleBar title="Create Operation" />
      <div className="flex flex-col border-x border-[#999] px-[5px] pt-1.5">
        <Header title="Type" />
        <div className={`${BODY} px-2 pt-1.5 pb-2.5`}>
          <label htmlFor="type" className="sr-only">Type</label>
          <Select id="type" value="mill_contour" />
        </div>
        <Header title="Operation Subtype" />
        <div className={`${BODY} h-[153px] pt-2 pl-[41px]`}>
          <div className="grid w-[204px] grid-cols-6">
            {SUBTYPES.map((s) => (
              <button key={s.name} aria-label={s.name} className="relative flex size-[34px] items-center justify-center">
                {s.name === "Streamline" ? (
                  <>
                    <span className="flex size-[30px] items-center justify-center rounded-[3px] border-2 border-[#777] bg-linear-to-b from-[#f8c8a0] to-[#ff8c38] outline-1 -outline-offset-3 outline-dotted outline-[#333]">
                      <Svg w={24}>{s.art}</Svg>
                    </span>
                    <span className="absolute -inset-x-2.5 -inset-y-1.5 rounded-[10px] border-6 border-[#00a2e8]" />
                  </>
                ) : (
                  <Svg w={24}>{s.art}</Svg>
                )}
              </button>
            ))}
          </div>
        </div>
        <Header title="Location" active />
        <div className={`${BODY} pt-1 pr-2 pb-[9px] pl-[7px]`}>
          {LOCATION.map(([name, value]) => (
            <div key={name} className="flex h-[25px] items-center justify-between">
              <label htmlFor={`loc-${name}`}>{name}</label>
              <Select id={`loc-${name}`} value={value} className="w-[140px]" />
            </div>
          ))}
        </div>
        <Header title="Name" />
        <div className={`${BODY} px-2 pt-1.5 pb-2.5`}>
          <label htmlFor="op-name" className="sr-only">Name</label>
          <input id="op-name" defaultValue="STREAMLINE" className="block h-[22px] w-full rounded-[4px] border border-[#555] bg-white px-1.5 pb-px" />
        </div>
        <div className="mt-1 flex h-9 justify-end gap-[7px] border-t border-[#aaa] pt-[3px] pr-2.5">
          <button className={`${PLAIN_BUTTON} border-[#2c7a1c] bg-linear-to-b from-[#c8e8b8] via-[#68c848] to-[#b0f490]`}>OK</button>
          <button className={`${PLAIN_BUTTON} border-[#777] bg-linear-to-b from-[#f6f6f6] via-[#c8c8c8] to-[#ececec]`}>Apply</button>
          <button className={`${PLAIN_BUTTON} border-[#777] bg-linear-to-b from-[#f6f6f6] via-[#c8c8c8] to-[#ececec]`}>Cancel</button>
        </div>
      </div>
    </div>
  );
}

const VECTORS = ["Specify Vector", "Tool Axis", "Tool Axis Up", "Away from Point", "Toward Point", "Away from Line", "Toward Line", "Normal to Drive", "Toward Drive", "Swarf Ruling"];

function VectorMenu() {
  return (
    <ul role="listbox" aria-label="Vector" className="absolute top-[318px] left-[115px] z-10 h-[173px] w-[141px] border border-[#555] bg-white leading-[17px] text-black">
      {VECTORS.map((v) => (
        <li key={v} role="option" aria-selected={v === "Toward Drive"} className={v === "Toward Drive" ? "bg-[#3399ff] pl-0.5 text-white" : "pl-0.5"}>{v}</li>
      ))}
      <li role="presentation" className="absolute top-[65px] -left-[18px] h-[23px] w-[121px] rounded-[6px] border-5 border-[#00a2e8]" />
      <li role="presentation" className="absolute top-[98px] -left-[14px] h-[26px] w-[135px] rounded-[6px] border-5 border-[#00a2e8]" />
      <li role="presentation" className="absolute top-[132px] -left-[13px] h-[28px] w-[119px] rounded-[8px] border-5 border-[#00a2e8]" />
    </ul>
  );
}

function Row({ label, children }: { label: ReactNode; children: ReactNode }) {
  return (
    <div className="flex h-[34px] shrink-0 items-start gap-1">
      <span className="min-w-0 flex-1 pt-[9px] whitespace-nowrap">{label}</span>
      {children}
    </div>
  );
}

function Streamline() {
  return (
    <div role="dialog" aria-label="Streamline" className="absolute top-1.5 left-[343px] z-10 h-[491px] w-[305px]">
      <div className="flex h-full flex-col overflow-hidden border-l-3 border-[#bbb] bg-[#ececec]">
        <TitleBar title="Streamline - [UJEMNE]" />
        <div className="flex flex-col pt-1 pr-[7px] pl-1.5">
          <Header title="Geometry" />
          <div className={`${BODY} h-[149px] px-[7px] pt-1.5`}>
            <Row label={<label htmlFor="geometry" className="-mt-1 block">Geometry</label>}>
              <Select id="geometry" value="WORKPIECE" className="w-[116px]" />
              <IconButton label="New geometry"><CreateGeometryIcon w={24} /></IconButton>
              <IconButton label="Edit geometry"><Wrench /></IconButton>
            </Row>
            <Row label="Specify Part">
              <IconButton label="Part" dim><PartIcon /></IconButton>
              <IconButton label="Display part"><Torch /></IconButton>
            </Row>
            <Row label="Specify Check">
              <IconButton label="Check"><CheckIcon /></IconButton>
              <IconButton label="Display check" dim><Torch dim /></IconButton>
            </Row>
            <Row label="Specify Cut Area">
              <IconButton label="Cut area"><CutAreaIcon /></IconButton>
              <IconButton label="Display cut area"><Torch /></IconButton>
            </Row>
          </div>
          <Header title="Drive Method" />
          <div className={`${BODY} h-[47px] px-[7px] pt-1.5`}>
            <Row label={<label htmlFor="drive" className="-mt-1 block">Method</label>}>
              <Select id="drive" value="Streamline" className="w-[140px]" />
              <IconButton label="Edit drive method"><Wrench /></IconButton>
            </Row>
          </div>
          <Header title="Projection Vector" />
          <div className={`${BODY} h-[81px] px-[7px] pt-1.5`}>
            <Row label={<label htmlFor="vector" className="-mt-1 block">Vector</label>}>
              <Select id="vector" value="Specify Vector" className="w-[140px]" plain />
              <IconButton label="Edit vector"><Wrench /></IconButton>
            </Row>
            <Row label={
              <span className="flex items-center gap-1">
                <Svg w={14} h={12}><path d="M1 7l3-2 2 3 6-7 1 1-7 9Z" fill="#18c828" stroke="#108818" strokeWidth=".8" /></Svg>
                Specify Vector
              </span>
            }>
              <button aria-label="Vector type" className="flex h-[30px] w-[60px] overflow-hidden rounded-[4px] border-2 border-[#666] bg-linear-to-b from-[#f8f8f8] via-[#d4d4d4] to-[#f0f0f0]">
                <span className="flex flex-1 items-end justify-end pr-0.5 pb-0.5">
                  <Svg w={12} h={14}><path d="M0 1.500h6.500v6M2 7.500h9M4 9.500h5M5 11.500h3" stroke="#b000c0" /></Svg>
                </span>
                <span className="flex h-full w-[15px] items-center justify-center border-l border-[#888] bg-linear-to-b from-[#1860d0] via-[#c0dcf4] to-[#88d0ff]"><Arrow className="text-black" /></span>
              </button>
            </Row>
          </div>
          <Header title="Tool" closed />
          <Header title="Tool Axis" closed />
          <Header title="Path Settings" />
          <div className={`${BODY} h-[90px] px-[7px] pt-1.5`}>
            <Row label={<label htmlFor="path-method" className="-mt-1 block">Method</label>}>
              <Select id="path-method" value="METHOD" className="w-[150px]" />
              <IconButton label="Edit method"><Wrench /></IconButton>
            </Row>
            <Row label="Cutting Parameters">
              <IconButton label="Cutting parameters"><Wrench /></IconButton>
            </Row>
          </div>
        </div>
      </div>
      <VectorMenu />
    </div>
  );
}

function Workspace() {
  return (
    <main className="relative flex min-h-[530px] flex-1 overflow-hidden border-t border-[#999] bg-linear-to-br from-[#808080] via-[#969696] via-70% to-[#868686]">
      <ResourceBar />
      <div className="mt-[500px] flex w-[276px] shrink-0 border-r-8 border-l-5 border-[#dcdcdc] bg-[#f6f6f6]">
        <span className="w-[192px] border-r border-black" />
        <span className="flex-1 border-r border-[#888]" />
      </div>
      <svg className="absolute top-0 left-[440px] h-[530px] w-[330px]" viewBox="440 196 330 530" fill="none" aria-hidden="true">
        <path d="M643 200l2-3 38 42 31 47 22 50 13 46 13 38 8 12M770 330L717 460 649 664 630 726M770 664L747 726M493 694l-8 32" stroke="#2c2c2c" strokeWidth=".8" />
      </svg>
      <CreateOperation />
      <Streamline />
    </main>
  );
}

export default function App() {
  return (
    <div className="flex min-h-screen flex-col overflow-hidden bg-[#8c8c8c] font-['Noto_Sans','Open_Sans',sans-serif] text-[12px] leading-4 text-[#1a1a1a]">
      <Patterns />
      <QuickAccess />
      <Tabs />
      <Ribbon />
      <SelectionBar />
      <p className="h-[21px] shrink-0 bg-[#dcdcdc] pl-[3px] text-[11px] leading-5 font-bold text-black">Choose type, subtype, location and specify operation name</p>
      <Workspace />
    </div>
  );
}
